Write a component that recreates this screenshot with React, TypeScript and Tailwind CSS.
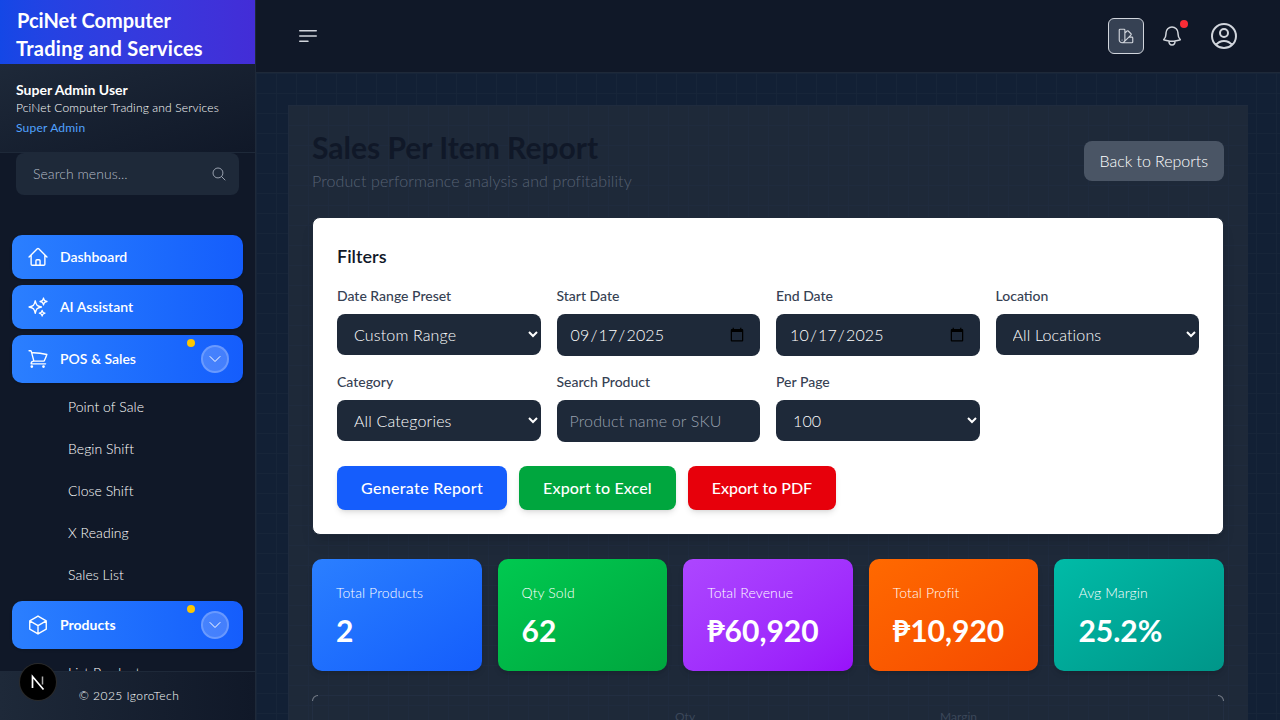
import type { ReactNode } from "react";
import {
  HiOutlineBars3BottomLeft,
  HiOutlineBell,
  HiOutlineChevronDown,
  HiOutlineCube,
  HiOutlineHome,
  HiOutlineMagnifyingGlass,
  HiOutlineShoppingCart,
  HiOutlineSparkles,
  HiOutlineSwatch,
  HiOutlineUserCircle,
} from "react-icons/hi2";

function NavBtn({ icon, label, bold, expand, h }: { icon: ReactNode; label: string; bold?: boolean; expand?: boolean; h: string }) {
  return (
    <div className={`${h} relative flex shrink-0 items-center rounded-[10px] bg-gradient-to-r from-[#2b7fff] to-[#155dfc] pl-[15px] pr-3.5 text-white shadow`}>
      <span className="flex w-[33px] shrink-0">{icon}</span>
      <span className={`pb-[2px] text-[14px] ${bold ? "font-bold" : "font-semibold"}`}>{label}</span>
      {expand && (
        <>
          <span className="absolute right-[48px] top-[4px] h-2 w-2 rounded-full bg-[#fdc700]" />
          <span className="ml-auto flex h-7 w-7 items-center justify-center rounded-full border-2 border-white/20 bg-white/20">
            <HiOutlineChevronDown size={16} />
          </span>
        </>
      )}
    </div>
  );
}

function Sub({ label }: { label: string }) {
  return <div className="flex h-[42px] items-center pl-[68px] text-[14px] font-light tracking-[0.05px] text-white">{label}</div>;
}

function Label({ children }: { children: ReactNode }) {
  return <label className="mb-2 block text-[14px] font-medium leading-5 text-[#364153]">{children}</label>;
}

const field = "block w-full rounded-lg bg-[#1e2939] text-[16px] font-light tracking-[0.15px] text-white outline-none";

function Stat({ title, value, cls }: { title: string; value: string; cls: string }) {
  return (
    <div className={`flex h-[112px] flex-col rounded-[10px] bg-gradient-to-br px-6 pt-6 text-white shadow-md ${cls}`}>
      <div className="text-[14px] font-light tracking-[0.1px] leading-5">{title}</div>
      <div className="mt-[9px] text-[30px] font-bold leading-9">{value}</div>
    </div>
  );
}

export default function App() {
  return (
    <div className="relative flex h-[720px] w-[1280px] overflow-hidden bg-[#101828] font-['Lato',sans-serif] text-white">
      <aside className="flex h-full w-[256px] shrink-0 flex-col border-r border-[#1e2939] bg-[#101828]">
        <div className="h-16 shrink-0 bg-gradient-to-r from-[#1447e6] to-[#432dd7] px-4 py-[6px] text-[20px] font-bold leading-[28px]">
          <div className="pl-px">PciNet Computer</div>
          <div className="tracking-[0.25px]">Trading and Services</div>
        </div>
        <div className="h-[89px] shrink-0 border-b border-[#1e2939] bg-gradient-to-br from-[#1e2939] to-[#101828] px-4 pt-4">
          <div className="text-[14px] font-bold leading-5">Super Admin User</div>
          <div className="text-[12px] font-light tracking-[0.15px] leading-4 text-white">PciNet Computer Trading and Services</div>
          <div className="mt-1 text-[12px] tracking-[0.2px] leading-4 text-[#51a2ff]">Super Admin</div>
        </div>
        <div className="relative mx-4 flex h-[42px] shrink-0 items-center rounded-lg bg-[#1e2939] pl-[17px] pr-[12px] text-[14px] font-light tracking-[0.05px] text-[#b4bbc6]">
          <span className="pb-[2px]">Search menus...</span>
          <HiOutlineMagnifyingGlass size={16} className="ml-auto text-[#99a1af]" />
        </div>
        <div className="flex min-h-0 flex-1 flex-col gap-1.5 overflow-hidden px-3 pt-10">
          <NavBtn h="h-11" icon={<HiOutlineHome size={22} />} label="Dashboard" />
          <NavBtn h="h-11" icon={<HiOutlineSparkles size={22} />} label="AI Assistant" />
          <NavBtn h="h-12" expand icon={<HiOutlineShoppingCart size={22} />} label="POS & Sales" />
          <div className="-mx-3 -mt-1 shrink-0">
            <Sub label="Point of Sale" />
            <Sub label="Begin Shift" />
            <Sub label="Close Shift" />
            <Sub label="X Reading" />
            <Sub label="Sales List" />
          </div>
          <NavBtn h="h-12" bold expand icon={<HiOutlineCube size={22} />} label="Products" />
          <div className="-mx-3 -mt-1 shrink-0">
            <Sub label="List Products" />
          </div>
        </div>
        <div className="relative z-10 flex h-[49px] shrink-0 items-center justify-center border-t border-[#1e2939] bg-gradient-to-r from-[#1e2939] to-[#101828] pl-[3px] text-[12px] font-light tracking-[0.45px] text-white">
          © 2025 IgoroTech
        </div>
      </aside>

      <div className="absolute bottom-5 left-5 z-20 flex h-9 w-9 items-center justify-center rounded-full bg-black shadow-[0_0_0_1px_#2a2a2a]">
        <svg width="18" height="18" viewBox="0 0 18 18" fill="none">
          <path d="M3.5 15V3.5l11 13" stroke="#fff" strokeWidth="1.7" />
          <path d="M13.5 3.5v8" stroke="#aaa" strokeWidth="1.5" />
        </svg>
      </div>

      <div className="flex min-w-0 flex-1 flex-col">
        <header className="flex h-[73px] shrink-0 items-center border-b border-[#1e2939] bg-[#101828] pl-[40px] pr-[40px]">
          <HiOutlineBars3BottomLeft size={24} className="text-[#d1d5dc]" />
          <div className="ml-auto flex h-9 w-9 items-center justify-center rounded-md border border-[#d1d5dc] bg-[#364153]">
            <HiOutlineSwatch size={18} className="text-[#d1d5dc]" />
          </div>
          <div className="relative ml-[10px] flex h-9 w-9 items-center justify-center text-[#d1d5dc]">
            <HiOutlineBell size={24} />
            <span className="absolute right-[2px] top-[2px] h-2 w-2 rounded-full bg-[#fb2c36]" />
          </div>
          <HiOutlineUserCircle size={32} className="ml-[18px] text-[#d1d5dc]" />
        </header>
        <main className="min-h-0 flex-1 overflow-hidden bg-[#122035] bg-[linear-gradient(to_right,#172539_1px,transparent_1px),linear-gradient(to_bottom,#172539_1px,transparent_1px)] bg-[size:20px_20px] px-8 pt-8">
          <div className="h-[700px] bg-[#1e2939] bg-[linear-gradient(to_right,#1f2b3e_1px,transparent_1px),linear-gradient(to_bottom,#1f2b3e_1px,transparent_1px)] bg-[size:20px_20px] px-6 pt-6">
            <div className="flex items-start justify-between">
              <div>
                <h1 className="text-[30px] font-bold leading-9 text-[#101828]">Sales Per Item Report</h1>
                <p className="mt-1 text-[16px] font-light tracking-[0.1px] leading-6 text-[#566173]">Product performance analysis and profitability</p>
              </div>
              <button className="mt-3 h-10 rounded-lg bg-[#4a5565] px-4 text-[16px] font-light tracking-[-0.05px] text-white">Back to Reports</button>
            </div>
            <section className="mt-6 h-[318px] rounded-lg border border-[#1e2939] bg-white px-6 pt-6 shadow-lg">
              <h2 className="text-[18px] font-semibold leading-7 text-[#101828]">Filters</h2>
              <div className="mt-4 grid grid-cols-4 gap-x-4 gap-y-4">
                <div>
                  <Label>Date Range Preset</Label>
                  <select className={`${field} h-[41px] px-[13px]`} defaultValue="c"><option value="c">Custom Range</option></select>
                </div>
                <div>
                  <Label>Start Date</Label>
                  <input type="date" defaultValue="2025-09-17" className={`${field} h-[42px] px-[13px]`} />
                </div>
                <div>
                  <Label>End Date</Label>
                  <input type="date" defaultValue="2025-10-17" className={`${field} h-[42px] px-[13px]`} />
                </div>
                <div>
                  <Label>Location</Label>
                  <select className={`${field} h-[41px] px-[13px]`}><option>All Locations</option></select>
                </div>
                <div>
                  <Label>Category</Label>
                  <select className={`${field} h-[41px] px-[13px]`}><option>All Categories</option></select>
                </div>
                <div>
                  <Label>Search Product</Label>
                  <input placeholder="Product name or SKU" className={`${field} h-[42px] px-[13px] pb-[2px] placeholder:text-[#99a1af]`} />
                </div>
                <div>
                  <Label>Per Page</Label>
                  <select className={`${field} h-[41px] px-[13px]`}><option>100</option></select>
                </div>
              </div>
              <div className="mt-6 flex gap-3">
                <button className="h-11 rounded-lg bg-[#155dfc] px-6 text-[16px] font-medium tracking-[0.33px] text-white shadow-md">Generate Report</button>
                <button className="h-11 rounded-lg bg-[#00a63e] px-6 text-[16px] font-medium tracking-[0.13px] text-white shadow-md">Export to Excel</button>
                <button className="h-11 rounded-lg bg-[#e7000b] px-6 text-[16px] font-medium tracking-[-0.05px] text-white shadow-md">Export to PDF</button>
              </div>
            </section>
            <div className="mt-6 grid grid-cols-5 gap-4">
              <Stat title="Total Products" value="2" cls="from-[#2b7fff] to-[#155dfc]" />
              <Stat title="Qty Sold" value="62" cls="from-[#00c950] to-[#00a63e]" />
              <Stat title="Total Revenue" value="₱60,920" cls="from-[#ad46ff] to-[#9810fa]" />
              <Stat title="Total Profit" value="₱10,920" cls="from-[#ff6900] to-[#f54900]" />
              <Stat title="Avg Margin" value="25.2%" cls="from-[#00bba7] to-[#009689]" />
            </div>
            <div className="relative mt-6 rounded-lg border border-[#222e42]">
              <span className="absolute -left-px -top-px h-1.5 w-1.5 rounded-tl-lg border-l border-t border-white/40" />
              <span className="absolute -right-px -top-px h-1.5 w-1.5 rounded-tr-lg border-r border-t border-white/40" />
              <div className="grid h-[58px] grid-cols-[145px_102px_93px_89px_105px_78px_91px_87px_1fr] items-center pl-4 text-[12px] leading-4 text-[#3b4759]">
                <div>Product</div>
                <div>SKU</div>
                <div>Category</div>
                <div className="ml-[6px]">Qty<br />Sold</div>
                <div>Revenue</div>
                <div>Profit</div>
                <div className="-ml-px">Margin<br />%</div>
                <div>WAC COST</div>
                <div>TRANSACTIONS</div>
              </div>
            </div>
          </div>
        </main>
      </div>
    </div>
  );
}
